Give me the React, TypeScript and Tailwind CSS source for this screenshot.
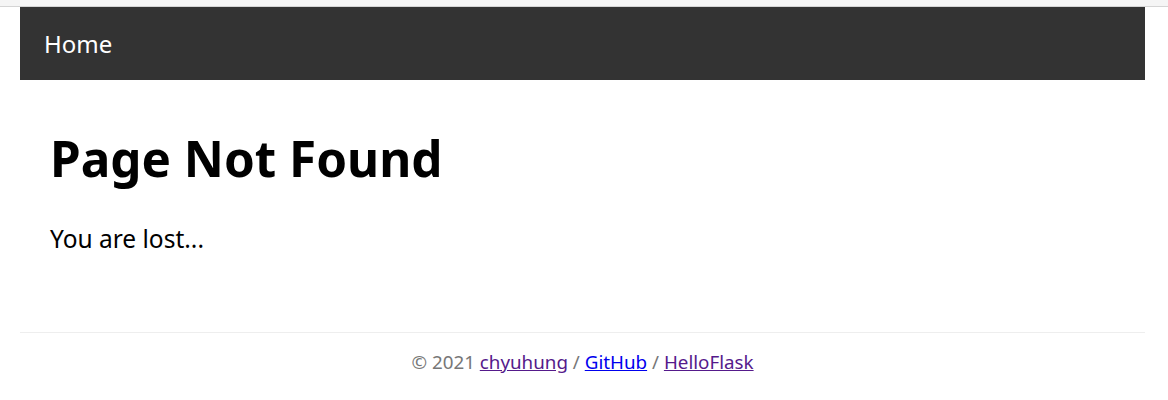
export default function App() {
  return (
    <div className="min-h-[400px] bg-white font-['Segoe_UI','Noto_Sans',sans-serif] text-black">
      {/* browser-ish top strip */}
      <div className="h-[7px] border-b border-[#d4d4d4] bg-[#f5f5f5]" />

      <div className="ml-[20px] w-[1125px]">
        <nav className="flex h-[73px] items-center bg-[#333333] px-[24px]">
          <a href="#" className="text-[24px] leading-none text-white">
            Home
          </a>
        </nav>

        <main className="px-[30px] pt-[45px] pb-[77px]">
          <h1 className="text-[49.4px] leading-[66px] font-bold">Page Not Found</h1>
          <p className="mt-[32px] text-[24.5px] leading-[32px]">You are lost...</p>
        </main>

        <footer className="border-t border-[#eeeeee] pt-[15px] text-center text-[18.8px] leading-[28px] text-[#777777]">
          © 2021{' '}
          <a href="#" className="text-[#551a8b] underline">
            chyuhung
          </a>{' '}
          /{' '}
          <a href="#" className="text-[#0000ee] underline">
            GitHub
          </a>{' '}
          /{' '}
          <a href="#" className="text-[#551a8b] underline">
            HelloFlask
          </a>
        </footer>
      </div>
    </div>
  )
}
